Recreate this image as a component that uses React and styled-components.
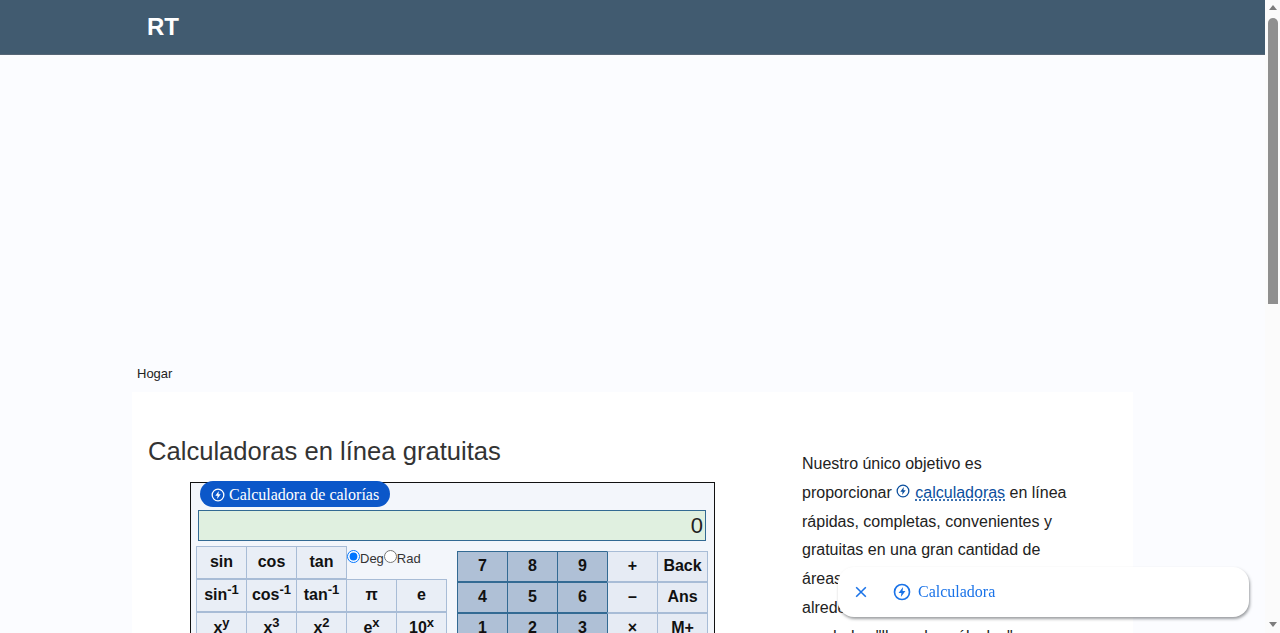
import React from 'react'
import styled, { createGlobalStyle } from 'styled-components'

const scienceRows = [
  [['sin', '-1'], ['cos', '-1'], ['tan', '-1'], ['π'], ['e']],
  [['x', 'y'], ['x', '3'], ['x', '2'], ['e', 'x'], ['10', 'x']],
  [['y√x'], ['3√x'], ['√x'], ['ln'], ['log']],
  [['('], [')'], ['1/x'], ['%'], ['n!']],
]

const numberRows = [
  ['7', '8', '9', '+', 'Back'],
  ['4', '5', '6', '–', 'Ans'],
  ['1', '2', '3', '×', 'M+'],
  ['0', '.', 'EXP', '÷', 'M-'],
  ['±', 'RND', 'AC', '=', 'MR'],
]

const isDigit = (label) => /^[0-9]$|^\.$|^EXP$|^±$|^RND$/.test(label)

const BoltCircle = ({ size = 14 }) => (
  <svg width={size} height={size} viewBox="0 0 24 24" fill="none" stroke="currentColor" strokeWidth="2.2">
    <circle cx="12" cy="12" r="10" />
    <path d="M13.4 5.2 7.4 13.4h3.8l-.7 5.4 6.1-8.2h-3.8z" fill="currentColor" stroke="none" />
  </svg>
)

const App = () => {
  return (
    <Shell>
      <GlobalStyle />
      <Scroller>
        <Header>
          <HeaderInner>
            <Logo>RT</Logo>
          </HeaderInner>
        </Header>
        <AdSlot />
        <Page>
          <Breadcrumb>Hogar</Breadcrumb>
          <Card>
            <MainColumn>
              <Title>Calculadoras en línea gratuitas</Title>
              <Calculator>
                <Pill>
                  <BoltCircle />
                  Calculadora de calorías
                </Pill>
                <Display>0</Display>
                <Keypads>
                  <Pad>
                    <ScienceRow>
                      <Key>sin</Key>
                      <Key>cos</Key>
                      <Key>tan</Key>
                      <Angle>
                        <input type="radio" name="angle" defaultChecked />
                        Deg
                        <input type="radio" name="angle" />
                        Rad
                      </Angle>
                    </ScienceRow>
                    {scienceRows.map((row, i) => (
                      <ScienceRow key={i}>
                        {row.map(([base, sup]) => (
                          <Key key={base + sup}>
                            {base}
                            {sup && <sup>{sup}</sup>}
                          </Key>
                        ))}
                      </ScienceRow>
                    ))}
                  </Pad>
                  <NumberPad>
                    {numberRows.flat().map((label) => (
                      <NumberKey key={label} $digit={isDigit(label)}>{label}</NumberKey>
                    ))}
                  </NumberPad>
                </Keypads>
              </Calculator>
            </MainColumn>
            <Aside>
              <p>
                Nuestro único objetivo es proporcionar{' '}
                <InlineLink>
                  <BoltCircle size={14} />
                  <span>calculadoras</span>
                </InlineLink>{' '}
                en línea rápidas, completas, convenientes y gratuitas en una gran cantidad de áreas.
                Actualmente, tenemos alrededor de 200 calculadoras para ayudarlos &quot;llevar los cálculos&quot;
                rápidamente en áreas como finanzas, fitness, salud, matemáticas y otras, y aún
                estamos desarrollando más. Nuestro objetivo es convertirnos en el sitio web integral
                para las personas que necesitan hacer cálculos rápidos. Además, creemos que Internet
                debe ser una fuente de herramientas gratuitas.
              </p>
            </Aside>
          </Card>
        </Page>
      </Scroller>
      <ScrollTrack>
        <ArrowUp />
        <Thumb />
        <ArrowDown />
      </ScrollTrack>
      <Toast>
        <CloseIcon viewBox="0 0 16 16">
          <path d="M2.5 2.5l11 11M13.5 2.5l-11 11" />
        </CloseIcon>
        <ToastLabel>
          <BoltCircle size={18} />
          Calculadora
        </ToastLabel>
      </Toast>
    </Shell>
  )
}

const GlobalStyle = createGlobalStyle`
  body {
    margin: 0;
    background: #fbfcff;
    font-family: "Liberation Sans", Arial, sans-serif;
    color: #222;
  }
`

const Shell = styled.div`
  display: flex;
  height: 100vh;
  overflow: hidden;
`

const Scroller = styled.div`
  flex: 1;
  min-width: 0;
  overflow-y: auto;
  scrollbar-width: none;
`

const ScrollTrack = styled.div`
  flex: none;
  width: 15px;
  display: flex;
  flex-direction: column;
  align-items: center;
  background: #fbfbfb;
`

const ArrowUp = styled.div`
  margin-top: 5px;
  width: 0;
  height: 0;
  border-left: 4.5px solid transparent;
  border-right: 4.5px solid transparent;
  border-bottom: 5px solid #7d7d7d;
`

const Thumb = styled.div`
  margin-top: 8px;
  width: 10px;
  height: 286px;
  border-radius: 5px 5px 0 0;
  background: #8f8f8f;
`

const ArrowDown = styled.div`
  margin-top: auto;
  margin-bottom: 6px;
  width: 0;
  height: 0;
  border-left: 4.5px solid transparent;
  border-right: 4.5px solid transparent;
  border-top: 5px solid #7d7d7d;
`

const Header = styled.header`
  height: 55px;
  background: #415b70;
  border-bottom: 1px solid #566676;
  box-sizing: border-box;
`

const HeaderInner = styled.div`
  width: 1001px;
  margin: 0 auto;
  padding: 11px 15px;
  box-sizing: border-box;
`

const Logo = styled.div`
  color: #fff;
  font-size: 24px;
  font-weight: 700;
  line-height: 32px;
`

const AdSlot = styled.div`
  height: 311px;
`

const Page = styled.main`
  width: 1001px;
  margin: 0 auto;
`

const Breadcrumb = styled.div`
  padding: 0 5px;
  height: 26px;
  font-size: 13px;
  line-height: 15px;
  color: #222;
`

const Card = styled.div`
  display: flex;
  background: #fff;
  padding: 40px 16px 60px;
  min-height: 800px;
  box-sizing: border-box;
`

const MainColumn = styled.section`
  width: 654px;
  flex: none;
`

const Title = styled.h1`
  margin: 0 0 12px;
  font-size: 25.6px;
  line-height: 38px;
  font-weight: 400;
  color: #333;
`

const Calculator = styled.div`
  position: relative;
  width: 525px;
  margin-left: 42px;
  padding: 27px 6px 6px 5px;
  box-sizing: border-box;
  background: #f3f6fb;
  border: 1px solid #111;
`

const Pill = styled.a`
  position: absolute;
  top: -2px;
  left: 9px;
  display: flex;
  align-items: center;
  gap: 4px;
  height: 26px;
  padding: 2px 11px 0;
  box-sizing: border-box;
  border-radius: 13px;
  background: #0b57c9;
  color: #fff;
  font-family: "Liberation Serif", serif;
  font-size: 16px;
  white-space: nowrap;
`

const Display = styled.div`
  height: 31px;
  margin: 0 2px 5px;
  padding: 0 2px;
  box-sizing: border-box;
  border: 1px solid #336a93;
  background: #e0f0e0;
  font-size: 22px;
  line-height: 29px;
  text-align: right;
  color: #222;
`

const Keypads = styled.div`
  display: flex;
  gap: 10px;
`

const Pad = styled.div`
  display: flex;
  flex-direction: column;
  width: 251px;
`

const ScienceRow = styled.div`
  display: grid;
  grid-template-columns: repeat(4, 50px) 51px;
`

const keyBase = `
  display: flex;
  align-items: center;
  justify-content: center;
  box-sizing: border-box;
  padding-bottom: 2px;
  font-weight: 700;
  font-size: 16px;
  color: #111;
  sup {
    font-size: 13px;
    line-height: 0;
    position: relative;
    top: -5px;
    align-self: center;
  }
`

const Key = styled.div`
  ${keyBase}
  height: 33px;
  background: #e9eef6;
  border: 1px solid #a8bcd6;
  &:not(:last-child) { border-right: none; }
`

const Angle = styled.label`
  grid-column: span 2;
  display: flex;
  align-items: flex-start;
  border-left: 1px solid #a8bcd6;
  font-size: 13px;
  line-height: 25px;
  color: #333;
  input {
    margin: 4px 0 0;
    width: 13px;
    height: 13px;
  }
`

const NumberPad = styled.div`
  display: grid;
  grid-template-columns: repeat(4, 50px) 51px;
  grid-auto-rows: 31px;
  margin: 5px 0 0;
  align-content: start;
  & > div:not(:nth-child(5n)) { border-right: none; }
  & > div:nth-child(5n + 4) { border-left-color: #336a93; }
`

const NumberKey = styled.div`
  ${keyBase}
  background: ${(p) => (p.$digit ? '#afc0d6' : '#e6ebf4')};
  border: 1px solid ${(p) => (p.$digit ? '#336a93' : '#a8bcd6')};
`

const Aside = styled.aside`
  width: 265px;
  padding-top: 18px;
  font-size: 16px;
  line-height: 28.8px;
  color: #222;
  p { margin: 0; }
`

const InlineLink = styled.a`
  color: #0b4f9e;
  svg {
    margin-right: 5px;
    vertical-align: 0;
  }
  span {
    text-decoration: underline dotted;
    text-underline-offset: 2px;
  }
`

const Toast = styled.div`
  position: fixed;
  left: 838px;
  top: 567px;
  width: 411px;
  height: 50px;
  box-sizing: border-box;
  display: flex;
  align-items: center;
  gap: 25px;
  padding: 0 16px;
  background: #fff;
  border-radius: 16px;
  box-shadow: 1px 2px 3px rgba(60, 64, 67, 0.5);
`

const CloseIcon = styled.svg`
  width: 14px;
  height: 14px;
  fill: none;
  stroke: #1a73e8;
  stroke-width: 1.8;
`

const ToastLabel = styled.div`
  display: flex;
  align-items: center;
  gap: 7px;
  color: #1a73e8;
  font-family: "Liberation Serif", serif;
  font-size: 16px;
`

export default App
